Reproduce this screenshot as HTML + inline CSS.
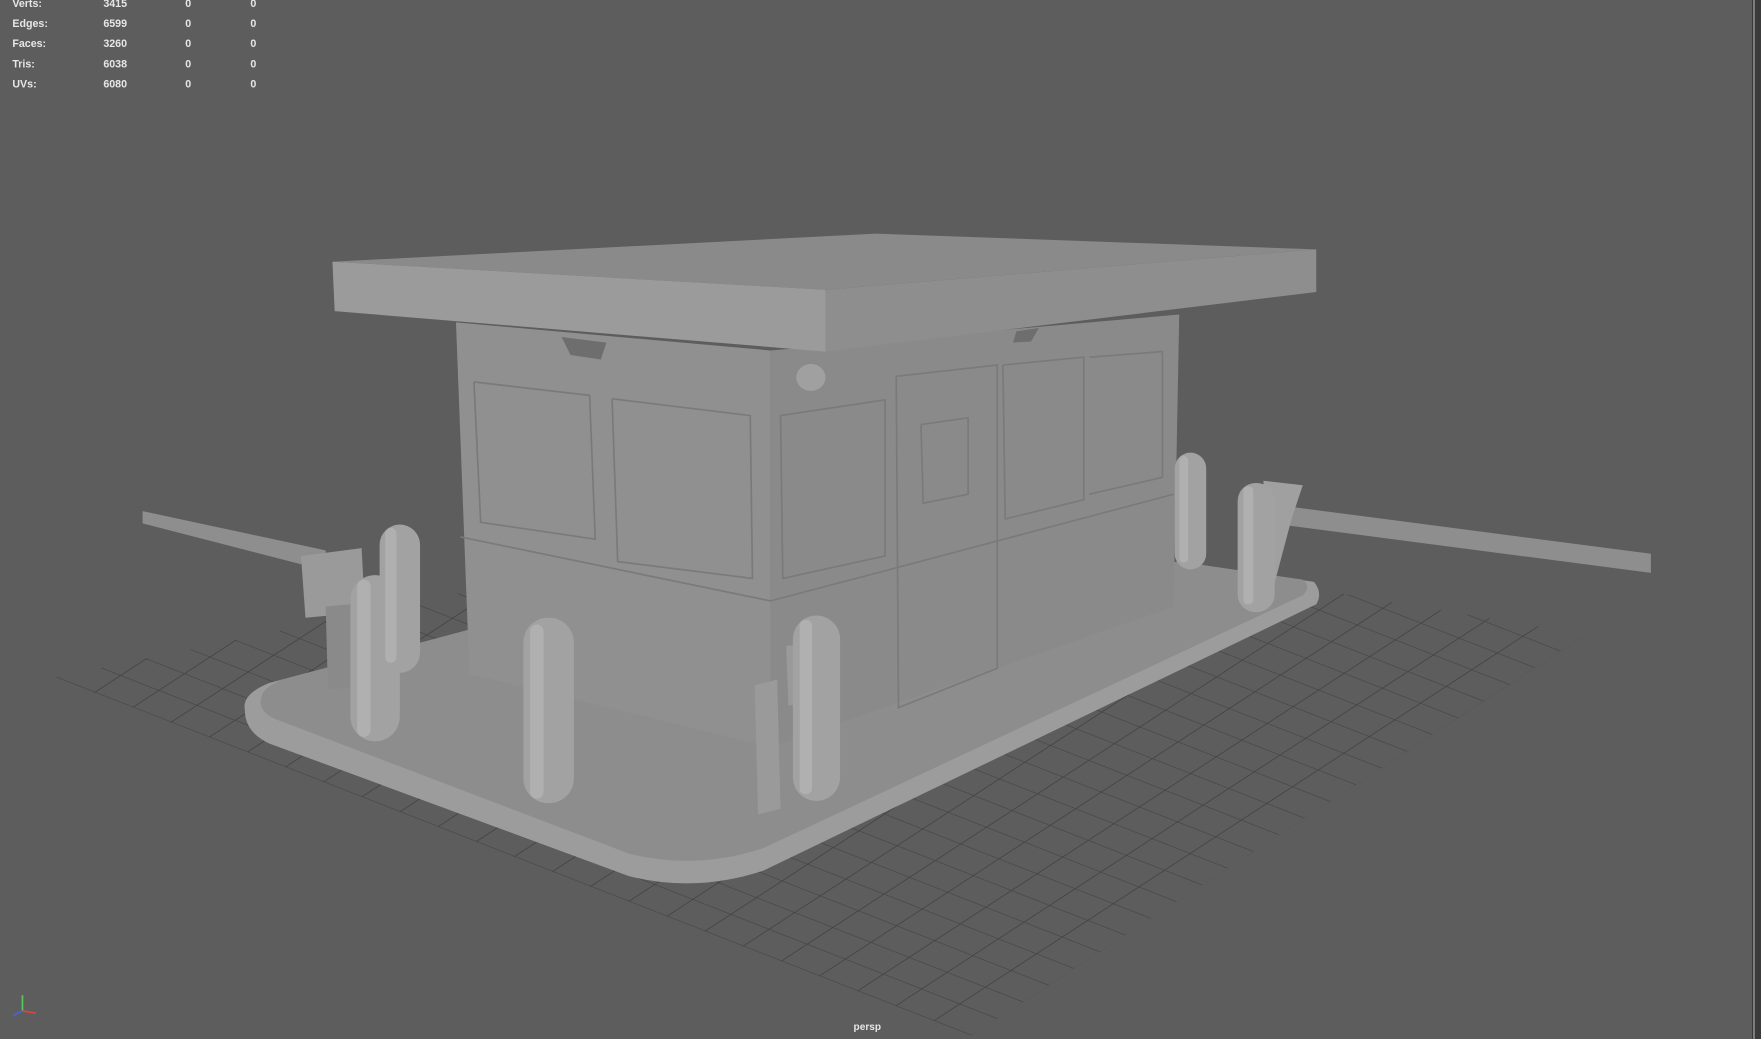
<!DOCTYPE html>
<html><head><meta charset="utf-8"><style>
html,body{margin:0;padding:0;background:#5d5d5d;overflow:hidden}
svg{display:block}
text{font-family:"Liberation Sans",sans-serif;font-weight:bold;fill:#e6e6e6}
</style></head><body>
<svg width="1761" height="1039" viewBox="0 0 1568 925" preserveAspectRatio="none">
<defs>
<pattern id="gp" x="0" y="0" width="1" height="1" patternUnits="userSpaceOnUse" patternTransform="matrix(33.96,13.29,22.79,-14.875,50,603)">
<path d="M0,0 L1,0 M0,0 L0,1" stroke="#434343" stroke-width="0.05" fill="none"/>
</pattern>
</defs>
<rect width="1568" height="925" fill="#5d5d5d"/>
<rect x="1560" y="0" width="8" height="925" fill="#3a3a3a"/>
<rect x="1561" y="0" width="1.5" height="925" fill="#8a8a8a"/>
<polygon points="50,603 865,922 1412,565 760,455" fill="url(#gp)"/>
<g font-size="9.5">
<text x="11" y="6">Verts:</text><text x="92" y="6">3415</text><text x="165" y="6">0</text><text x="223" y="6">0</text>
<text x="11" y="24">Edges:</text><text x="92" y="24">6599</text><text x="165" y="24">0</text><text x="223" y="24">0</text>
<text x="11" y="42">Faces:</text><text x="92" y="42">3260</text><text x="165" y="42">0</text><text x="223" y="42">0</text>
<text x="11" y="60">Tris:</text><text x="92" y="60">6038</text><text x="165" y="60">0</text><text x="223" y="60">0</text>
<text x="11" y="78">UVs:</text><text x="92" y="78">6080</text><text x="165" y="78">0</text><text x="223" y="78">0</text>
<text x="760" y="917" font-size="9">persp</text>
</g>
<g stroke-width="1.5"><line x1="20" y1="900" x2="20" y2="886" stroke="#5c5"/><line x1="20" y1="900" x2="32" y2="902" stroke="#d44"/><line x1="20" y1="900" x2="12" y2="904" stroke="#46d"/></g>
<polygon points="127,455 290,490 290,508 127,466" fill="#8e8e8e"/>
<polygon points="1140,450 1470,493 1470,510 1140,467" fill="#8e8e8e"/>
<path d="M218,632 Q215,618 240,608 L420,560 L1050,500 L1170,518 Q1178,528 1172,538 L680,775 Q620,795 560,780 L240,662 Q218,652 218,632Z" fill="#9c9c9c"/>
<path d="M232,625 Q232,612 252,605 L420,560 L1050,500 L1160,516 Q1168,522 1160,530 L680,755 Q620,775 560,760 L250,642 Q232,636 232,625Z" fill="#8d8d8d"/>
<polygon points="406,287 686,312 686,665 418,600" fill="#909090"/>
<polygon points="686,312 1050,280 1045,540 686,665" fill="#8a8a8a"/>
<g fill="none" stroke="#7a7a7a" stroke-width="1.5">
<polyline points="422,340 525,352 530,480 428,465 422,340"/>
<polyline points="545,355 668,370 670,515 550,500 545,355"/>
<polyline points="695,370 788,356 788,495 697,515 695,370"/>
<polyline points="410,478 686,535 800,505 1045,440"/>
<polyline points="798,335 888,325 888,595 800,630 798,335"/>
<polyline points="820,378 862,372 862,440 822,448 820,378"/>
<polyline points="893,325 965,318 965,445 895,462 893,325"/>
<polyline points="970,318 1035,313 1035,425 970,440"/>
</g>
<polygon points="296,233 780,208 1172,222 735,258" fill="#8a8a8a"/>
<polygon points="296,233 735,258 735,313 298,277" fill="#9b9b9b"/>
<polygon points="735,258 1172,222 1172,260 735,313" fill="#8e8e8e"/>
<polygon points="500,300 540,305 535,320 508,316" fill="#6e6e6e"/>
<polygon points="905,295 925,292 918,304 902,305" fill="#6e6e6e"/>
<ellipse cx="722" cy="336" rx="13" ry="12" fill="#a0a0a0"/>
<polygon points="268,495 322,488 325,545 272,550" fill="#9a9a9a"/>
<polygon points="290,540 312,538 315,612 292,614" fill="#8a8a8a"/>
<polygon points="1125,428 1160,432 1150,462 1132,530 1125,530" fill="#a0a0a0"/>
<polygon points="700,575 745,570 745,622 702,628" fill="#9a9a9a"/>
<polygon points="672,610 692,605 695,720 675,725" fill="#9a9a9a"/>
<g fill="#a2a2a2">
<rect x="338" y="467" width="36" height="132" rx="18"/>
<rect x="312" y="512" width="44" height="148" rx="22"/>
<rect x="466" y="550" width="45" height="165" rx="22"/>
<rect x="706" y="548" width="42" height="165" rx="21"/>
<rect x="1046" y="403" width="28" height="104" rx="14"/>
<rect x="1102" y="430" width="33" height="115" rx="16"/>
</g>
<g fill="#b0b0b0">
<rect x="343" y="470" width="10" height="120" rx="5"/>
<rect x="318" y="516" width="12" height="140" rx="6"/>
<rect x="472" y="556" width="12" height="155" rx="6"/>
<rect x="712" y="552" width="11" height="155" rx="5"/>
<rect x="1050" y="406" width="8" height="95" rx="4"/>
<rect x="1107" y="433" width="9" height="105" rx="4"/>
</g>
</svg>
</body></html>
